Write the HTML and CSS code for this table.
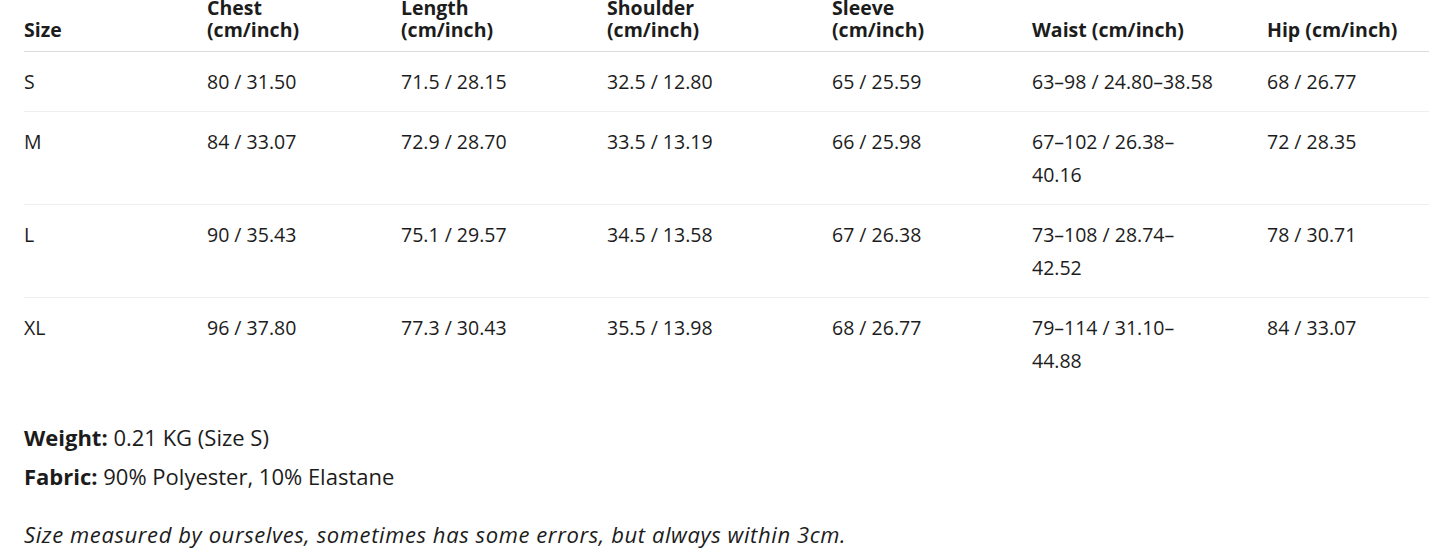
FILE: index.html
```html
<!DOCTYPE html>
<html lang="en">
<head>
    <meta charset="UTF-8">
    <meta name="viewport" content="width=device-width, initial-scale=1.0">
    <title>Size Chart</title>
    <link rel="stylesheet" href="styles.css">
</head>
<body>
    <div class="size-guide">
        <table class="size-table">
            <colgroup>
                <col class="col-size">
                <col class="col-chest">
                <col class="col-length">
                <col class="col-shoulder">
                <col class="col-sleeve">
                <col class="col-waist">
                <col class="col-hip">
            </colgroup>
            <thead>
                <tr>
                    <th>Size</th>
                    <th>Chest<br>(cm/inch)</th>
                    <th>Length<br>(cm/inch)</th>
                    <th>Shoulder<br>(cm/inch)</th>
                    <th>Sleeve<br>(cm/inch)</th>
                    <th>Waist (cm/inch)</th>
                    <th>Hip (cm/inch)</th>
                </tr>
            </thead>
            <tbody>
                <tr>
                    <td>S</td>
                    <td>80 / 31.50</td>
                    <td>71.5 / 28.15</td>
                    <td>32.5 / 12.80</td>
                    <td>65 / 25.59</td>
                    <td>63–98 / 24.80–38.58</td>
                    <td>68 / 26.77</td>
                </tr>
                <tr>
                    <td>M</td>
                    <td>84 / 33.07</td>
                    <td>72.9 / 28.70</td>
                    <td>33.5 / 13.19</td>
                    <td>66 / 25.98</td>
                    <td>67–102 / 26.38–40.16</td>
                    <td>72 / 28.35</td>
                </tr>
                <tr>
                    <td>L</td>
                    <td>90 / 35.43</td>
                    <td>75.1 / 29.57</td>
                    <td>34.5 / 13.58</td>
                    <td>67 / 26.38</td>
                    <td>73–108 / 28.74–42.52</td>
                    <td>78 / 30.71</td>
                </tr>
                <tr>
                    <td>XL</td>
                    <td>96 / 37.80</td>
                    <td>77.3 / 30.43</td>
                    <td>35.5 / 13.98</td>
                    <td>68 / 26.77</td>
                    <td>79–114 / 31.10–44.88</td>
                    <td>84 / 33.07</td>
                </tr>
            </tbody>
        </table>

        <div class="specs">
            <p><strong>Weight:</strong> 0.21 KG (Size S)</p>
            <p><strong>Fabric:</strong> 90% Polyester, 10% Elastane</p>
            <p class="note">Size measured by ourselves, sometimes has some errors, but always within 3cm.</p>
        </div>
    </div>
</body>
</html>
```

FILE: styles.css
```css
body {
    margin: 0;
    font-family: "Open Sans", "Noto Sans", sans-serif;
    font-size: 19.5px;
    color: #1c1c1c;
    background: #fff;
}
.size-guide {
    padding: 0 16px 0 24px;
    margin-top: -3px;
}
.size-table {
    width: 1405px;
    border-collapse: collapse;
    table-layout: fixed;
}
.col-size { width: 183px; }
.col-chest { width: 194px; }
.col-length { width: 206px; }
.col-shoulder { width: 225px; }
.col-sleeve { width: 200px; }
.col-waist { width: 235px; }
.col-hip { width: 162px; }
.size-table th {
    text-align: left;
    vertical-align: bottom;
    font-weight: 700;
    line-height: 22px;
    padding: 0 16px 10px 0;
    border-bottom: 1px solid #dcdcdc;
}
.size-table td {
    text-align: left;
    vertical-align: top;
    line-height: 33px;
    padding: 13px 16px 13px 0;
    border-bottom: 1px solid #efefef;
}
.size-table td:nth-child(6) {
    padding-right: 49px;
}
.size-table tbody tr:last-child td {
    border-bottom: none;
}
.specs {
    margin-top: 28px;
    font-size: 22px;
}
.specs p {
    margin: 0;
    line-height: 39px;
}
.specs .note {
    margin-top: 19px;
    font-style: italic;
    letter-spacing: 0.6px;
}
```
